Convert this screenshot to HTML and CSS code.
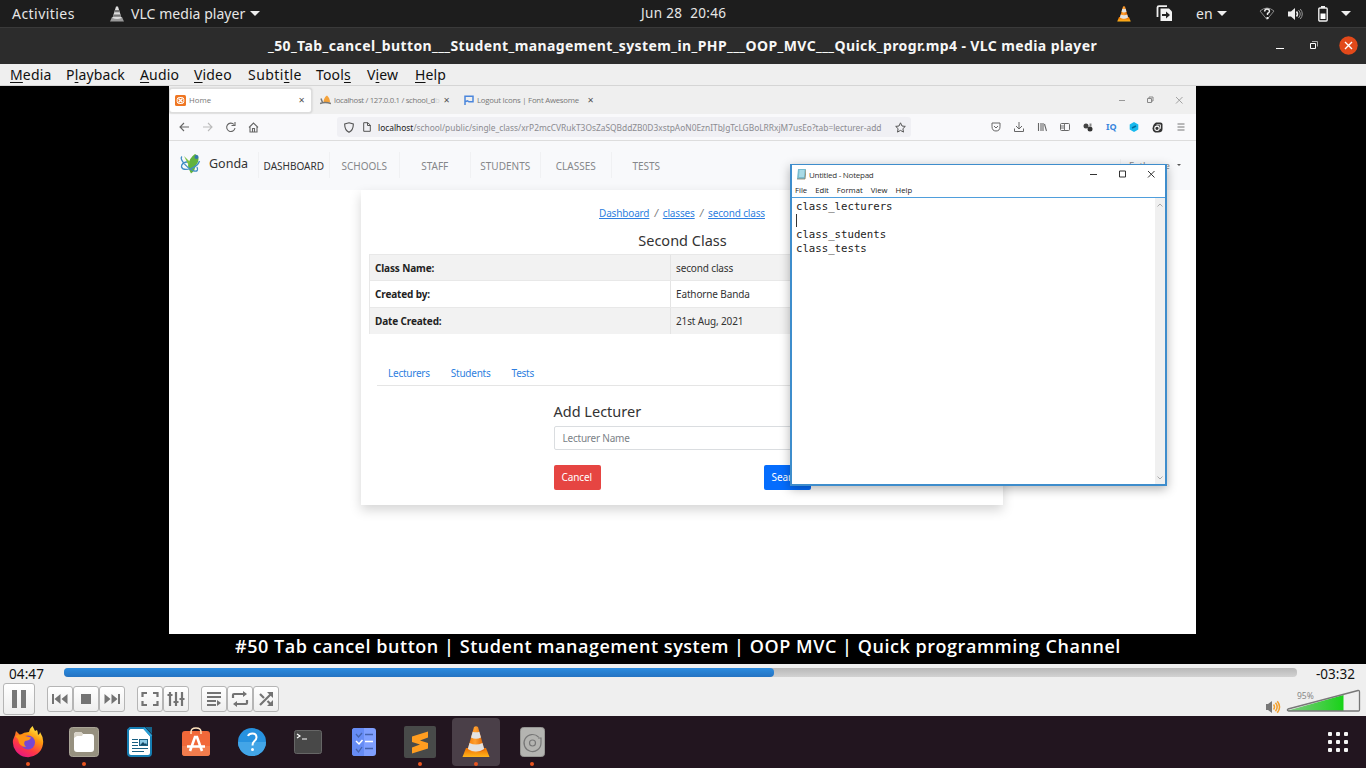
FILE: index.html
```html
<!DOCTYPE html>
<html lang="en">
<head>
<meta charset="utf-8">
<title>VLC media player</title>
<link rel="stylesheet" href="styles.css">
</head>
<body>
<svg class="defs" width="0" height="0">
  <defs>
    <linearGradient id="orange" x1="0" x2="1"><stop offset="0" stop-color="#f57900"/><stop offset=".45" stop-color="#ffa030"/><stop offset="1" stop-color="#d95d00"/></linearGradient>
    <linearGradient id="base" x1="0" y1="0" x2="0" y2="1"><stop offset="0" stop-color="#ef7000"/><stop offset="1" stop-color="#ffb51c"/></linearGradient>
    <linearGradient id="fire" x1=".8" y1="0" x2=".25" y2="1"><stop offset="0" stop-color="#fff44f"/><stop offset=".35" stop-color="#ff980e"/><stop offset=".7" stop-color="#ff3647"/><stop offset="1" stop-color="#e31587"/></linearGradient>
    <linearGradient id="volume" x1="0" x2="1"><stop offset="0" stop-color="#80c983"/><stop offset="1" stop-color="#18d318"/></linearGradient>
    <symbol id="cone" viewBox="0 0 28 32">
      <path d="M4 22H24L27.500 31H.5Z" fill="url(#base)"/>
      <path d="M12 1Q14-.3 16 1L22.500 24Q14 29 5.500 24Z" fill="url(#orange)"/>
      <path d="M10.700 5.700Q14 7 17.300 5.700L19 11.500Q14 14 9 11.500ZM7.500 17Q14 20 20.500 17L22.200 23Q14 28 5.800 23Z" fill="#e2e2e2"/>
    </symbol>
  </defs>
</svg>

<header class="panel">
  <span class="panel-activities">Activities</span>
  <svg class="panel-app-icon" width="14" height="16" viewBox="0 0 14 16"><path d="M2 11h10l2 4.500H0z" fill="#999"/><path d="M6 .5h2l3.500 11.500Q7 14 2.500 12z" fill="#ddd"/><path d="M5 4h4l.8 2.300H4.200zM3.600 8.500h6.800l.8 2.200H2.800z" fill="#777"/></svg>
  <span class="panel-app">VLC media player</span>
  <i class="caret"></i>
  <span class="panel-clock">Jun 28&nbsp; 20:46</span>
  <svg class="tray-cone" width="14" height="16"><use href="#cone"/></svg>
  <svg class="tray-share" width="17" height="17" viewBox="0 0 17 17"><path d="M1.500 12V2.500Q1.500 1.200 3 1.200H11" fill="none" stroke="#eee" stroke-width="1.800"/><path d="M4.500 3.500H13l3 3V16H4.500z" fill="#f2f2f2"/><path d="M6 10h5" stroke="#222" stroke-width="2"/><path d="M10 6.500l4 3.500-4 3.500z" fill="#222"/></svg>
  <span class="panel-lang">en</span><i class="caret"></i>
  <svg class="tray-wifi" width="16" height="14" viewBox="0 0 16 14"><path d="M1 4Q8-2 15 4L8 12.500Z" fill="none" stroke="#888"/><path d="M5.500 4.500Q6 2 8 2Q10.500 2 10.500 4.200Q10.500 5.500 8.500 6.500V8" fill="none" stroke="#eee" stroke-width="1.400"/><rect x="7.500" y="10" width="2" height="2" fill="#eee"/></svg>
  <svg class="tray-sound" width="16" height="14" viewBox="0 0 16 14"><path d="M1 4.500h3L8 1v12L4 9.500H1z" fill="#eee"/><path d="M9.500 4.500q2 2.500 0 5" fill="none" stroke="#eee" stroke-width="1.500"/><path d="M11.500 3q3.500 4 0 8M13.300 2q4 5 0 10" fill="none" stroke="#999"/></svg>
  <svg class="tray-battery" width="10" height="16" viewBox="0 0 10 16"><path d="M3 0h4v2H3z" fill="#eee"/><rect x=".8" y="2" width="8.400" height="13" rx="1" fill="none" stroke="#eee" stroke-width="1.400"/><path d="M2.500 7.500h5v5.500h-5z" fill="#fff"/></svg>
  <i class="caret caret-last"></i>
</header>

<div class="titlebar">
  <span class="titlebar-text">_50_Tab_cancel_button___Student_management_system_in_PHP___OOP_MVC___Quick_progr.mp4 - VLC media player</span>
  <div class="titlebar-buttons">
    <svg width="8" height="10"><path d="M0 8.500h8" stroke="#fff"/></svg>
    <svg width="8" height="8"><path d="M2 .5h5.500v5" fill="none" stroke="#aaa"/><path d="M.5 2.500h5v5h-5z" fill="none" stroke="#fff"/></svg>
    <svg width="19" height="19"><circle cx="9.500" cy="9.500" r="9.200" fill="#e2491a"/><path d="M6 6l7 7m0-7l-7 7" stroke="#fff" stroke-width="1.400"/></svg>
  </div>
</div>

<nav class="menubar">
  <span class="m1"><u>M</u>edia</span><span class="m2">P<u>l</u>ayback</span><span class="m3"><u>A</u>udio</span><span class="m4"><u>V</u>ideo</span><span class="m5">Subti<u>t</u>le</span><span class="m6">Tool<u>s</u></span><span class="m7">V<u>i</u>ew</span><span class="m8"><u>H</u>elp</span>
</nav>

<main class="video">
  <section class="browser">
    <div class="tabs">
      <div class="tab tab-active">
        <svg width="11" height="11"><rect width="11" height="11" rx="1.500" fill="#ef7622"/><path d="M3.500 3.500l4 4m0-4l-4 4" stroke="#fff" stroke-width="1.300"/><rect x="2.200" y="2.500" width="6.600" height="6" rx="2" fill="none" stroke="#fff"/></svg>
        <span class="tab-home">Home</span><b class="tab-close">✕</b>
      </div>
      <div class="tab tab-two">
        <svg width="11" height="10"><path d="M3.500 7Q4 2 7 0.500Q10 3 10 7.500z" fill="#f4a23a"/><path d="M1 3.500l1.500 4M0 8.500Q5 6.500 11 8.500" stroke="#777" stroke-width="1.500" fill="none"/></svg>
        <span class="tab-local">localhost / 127.0.0.1 / school_d<em>b</em></span><b class="tab-close">✕</b>
      </div>
      <div class="tab tab-three">
        <svg width="10" height="10"><path d="M1 10V1.200h8v5.600H5L3.500 5.800 1 6.800" fill="none" stroke="#4b86dc" stroke-width="1.500"/></svg>
        <span class="tab-fa">Logout Icons | Font Awesome</span><b class="tab-close">✕</b>
      </div>
      <svg class="win-controls" width="64" height="8" viewBox="0 0 64 8"><path d="M0 4.500h6" stroke="#999"/><path d="M28.500 2.500h4v4h-4zM30 2V1h4v4h-1" fill="none" stroke="#888"/><path d="M57 1l6.500 6.500m0-6.500L57 7.500" stroke="#999" stroke-width=".9"/></svg>
    </div>

    <div class="toolbar">
      <svg class="nav-buttons" width="80" height="12" viewBox="0 0 80 12" fill="none" stroke="#666" stroke-width="1.100"><path d="M10 6H1m4-4L1 6l4 4"/><path d="M24 6h9m-4-4l4 4-4 4" stroke="#bbb"/><path d="M55 3.500A4.200 4.200 0 1 0 56 7M56 1v3.500h-3.500"/><path d="M70 6.500L74.500 2l4.500 4.500M71 5.500V11h7V5.500M73.500 11V7.500h2V11"/></svg>
      <div class="address">
        <svg width="10" height="11" viewBox="0 0 10 11"><path d="M5 .7L9.300 2Q9.500 8 5 10.300Q.5 8 .7 2z" fill="none" stroke="#555" stroke-width="1.100"/></svg>
        <svg class="page-icon" width="8" height="10" viewBox="0 0 8 10"><path d="M.7.700h4L7.300 3v6.300H.7zM4.500.7v2.800h2.800" fill="none" stroke="#555"/></svg>
        <span class="url"><b>localhost</b>/school/public/single_class/xrP2mcCVRukT3OsZaSQBddZB0D3xstpAoN0EznITbJgTcLGBoLRRxjM7usEo?tab=lecturer-add</span>
        <svg class="star" width="11" height="11" viewBox="0 0 11 11"><path d="M5.500.8L7 4l3.300.4-2.400 2.300.6 3.400-3-1.700-3 1.700.6-3.400L.7 4.400 4 4z" fill="none" stroke="#555"/></svg>
      </div>
      <div class="extensions">
        <svg width="10" height="10" viewBox="0 0 10 10"><path d="M1 1h8v3.500Q9 9 5 9T1 4.500zM3 4l2 2 2-2" fill="none" stroke="#666"/></svg>
        <svg width="10" height="10" viewBox="0 0 10 10"><path d="M5 0v6.500M2 4l3 3 3-3M.5 6.500v3h9v-3" fill="none" stroke="#666"/></svg>
        <svg width="10" height="10" viewBox="0 0 10 10"><path d="M1.500 1v8M4 1v8M6 1v8M7.500 2l2 7" fill="none" stroke="#666" stroke-width="1.100"/></svg>
        <svg width="10" height="10" viewBox="0 0 10 10"><rect x=".5" y="1.500" width="9" height="7" rx="1" fill="none" stroke="#666"/><path d="M4.500 1.500v7M1 4h3M1 6h3" stroke="#777"/></svg>
        <svg width="10" height="10" viewBox="0 0 10 10"><circle cx="3" cy="4" r="2.500" fill="#444"/><circle cx="7" cy="7" r="2.500" fill="#333"/><path d="M6.500 1.500h2v3h-2z" fill="#888"/></svg>
        <span class="iq">IQ</span>
        <svg width="10" height="10" viewBox="0 0 10 10"><path d="M5 0l4.300 2.500v5L5 10 .7 7.500v-5z" fill="#17b9ee"/><path d="M3 6l4-2" stroke="#056a9a" stroke-width="1.500"/></svg>
        <svg width="11" height="11" viewBox="0 0 11 11"><path d="M4 .5h4.500q2 0 2 2V7q0 3.500-4.500 3.500H3Q.5 9.500.5 6.500 1 2 4 .5z" fill="#333"/><circle cx="5" cy="6.300" r="2.200" fill="none" stroke="#fff" stroke-width="1.100"/><path d="M4.500 2.800h4v4" stroke="#fff" fill="none" stroke-width=".8"/></svg>
        <svg width="10" height="10" viewBox="0 0 10 10"><path d="M1.500 2h7m-7 3h7m-7 3h7" stroke="#777"/></svg>
      </div>
    </div>

    <nav class="site-nav">
      <svg class="logo" width="21" height="22" viewBox="0 0 21 22"><path d="M8 13Q9 5 15 1Q20 3 18 9Q15 13 14 18L11 20.500Q9 17 8 13" fill="#62b33e"/><path d="M2 3.500Q0 5 3 9Q7 15 14 18Q19 19 17 14M9 8.500Q1 9.500 1.500 14Q3 18 11 15.500Q18 13 19.500 8" fill="none" stroke="#3f8dc4" stroke-width="1.300"/><path d="M4 3l6 6-1 4z" fill="#7cc142"/><circle cx="16.500" cy="4" r="2" fill="#3476ae"/></svg>
      <span class="brand">Gonda</span>
      <a class="on">DASHBOARD</a><a>SCHOOLS</a><a>STAFF</a><a>STUDENTS</a><a>CLASSES</a><a>TESTS</a>
      <span class="account">Eathorne<i></i></span>
    </nav>

    <div class="card">
      <div class="crumbs"><u>Dashboard</u><i>/</i><u>classes</u><i>/</i><u>second class</u></div>
      <h1>Second Class</h1>
      <div class="table">
        <div class="row shade"><b>Class Name:</b><span>second class</span></div>
        <div class="row"><b>Created by:</b><span>Eathorne Banda</span></div>
        <div class="row shade"><b>Date Created:</b><span>21st Aug, 2021</span></div>
      </div>
      <div class="pills"><a>Lecturers</a><a>Students</a><a>Tests</a></div>
      <div class="form">
        <h2>Add Lecturer</h2>
        <div class="field">Lecturer Name</div>
        <div class="actions"><span class="btn red">Cancel</span><span class="btn blue">Search</span></div>
      </div>
    </div>

    <aside class="notepad">
      <div class="np-title">
        <svg width="10" height="12" viewBox="0 0 10 12"><path d="M2 1h8L9 11H1z" fill="#79bccf"/><path d="M3.500 2h5L8 9H3z" fill="#a9dbe6"/><path d="M1 11h8l1-9" stroke="#8b8264" fill="none" stroke-width=".8"/></svg>
        <span>Untitled - Notepad</span>
        <svg class="np-controls" width="66" height="8" viewBox="0 0 66 8"><path d="M0 4.500h7" stroke="#333"/><path d="M29.500 1h6v6h-6z" fill="none" stroke="#333"/><path d="M58 1l6.500 6.500m0-6.500L58 7.500" stroke="#333"/></svg>
      </div>
      <div class="np-menu"><span>File</span><span>Edit</span><span>Format</span><span>View</span><span>Help</span></div>
      <div class="np-body">
        <div class="np-text"><p>class_lecturers</p><p><i></i></p><p>class_students</p><p>class_tests</p></div>
        <div class="np-scroll"><svg width="6" height="4"><path d="M.5 3.500L3 1l2.500 2.500" fill="none" stroke="#aaa"/></svg><svg width="6" height="4"><path d="M.5.500L3 3 5.500.5" fill="none" stroke="#aaa"/></svg></div>
      </div>
    </aside>
  </section>
  <p class="caption">#50 Tab cancel button | Student management system | OOP MVC | Quick programming Channel</p>
</main>

<section class="controls">
  <div class="seek"><span class="t-now">04:47</span><div class="track"><div class="fill" style="width:57.6%"></div></div><span class="t-left">-03:32</span></div>
  <div class="buttons">
    <span class="cbtn big"><svg width="18" height="20"><path d="M2 1h5v18H2zM11 1h5v18h-5z" fill="#777"/></svg></span>
    <div class="group">
      <span class="cbtn"><svg width="18" height="16" fill="#737373"><path d="M1 3h2v10H1zM9.500 3v10L3.500 8zM16.500 3v10l-6-5z"/></svg></span>
      <span class="cbtn"><svg width="18" height="16"><path d="M4 3h10v10H4z" fill="#737373"/></svg></span>
      <span class="cbtn"><svg width="18" height="16" fill="#737373"><path d="M1.500 3v10l6-5zM8.500 3v10l6-5zM15 3h2v10h-2z"/></svg></span>
    </div>
    <div class="group">
      <span class="cbtn"><svg width="18" height="16"><path d="M1.500 6V2H6M12 2h4.500v4M16.500 10v4H12M6 14H1.500v-4" fill="none" stroke="#737373" stroke-width="2.200"/></svg></span>
      <span class="cbtn"><svg width="18" height="16"><path d="M3 1v14M9 1v14M15 1v14M0.500 4h5M6.500 11h5M12.500 8h5" stroke="#737373" stroke-width="2.200"/></svg></span>
    </div>
    <div class="group">
      <span class="cbtn"><svg width="18" height="16"><path d="M2 2h14M2 6h14M2 10h9M2 14h9" stroke="#737373" stroke-width="2"/><path d="M12 9l4 3-4 3z" fill="#737373"/></svg></span>
      <span class="cbtn"><svg width="18" height="16"><path d="M2 7V4q0-1 1-1h10M16 9v3q0 1-1 1H5" fill="none" stroke="#737373" stroke-width="2.200"/><path d="M12 0l4 3-4 3zM6 10l-4 3 4 3z" fill="#737373"/></svg></span>
      <span class="cbtn"><svg width="18" height="16"><path d="M3 14L14 3M3 3l4 4M10.500 10l4 4" fill="none" stroke="#737373" stroke-width="2.200"/><path d="M10 1h6v6zM16 9v6h-6z" fill="#737373"/></svg></span>
    </div>
    <svg class="speaker" width="16" height="14" viewBox="0 0 16 14"><path d="M1 4h2l4-3v12l-4-3H1z" fill="#777"/><path d="M8.500 4.500q2 2.500 0 5M10.500 2.800q3.300 4.200 0 8.400M12.300 1.300q4.500 5.700 0 11.400" fill="none" stroke="#f3a02c" stroke-width="1.500"/></svg>
    <div class="volume"><span>95%</span><svg width="75" height="24" viewBox="0 0 75 24"><path d="M2 21.500L57.500 6v16H2z" fill="url(#volume)"/><path d="M2 20L72 1.500Q73.500 1.200 73.500 3v18q0 1-1 1H2.500q-2-1-.5-2z" fill="none" stroke="#777" stroke-width="1.300"/></svg></div>
  </div>
</section>

<footer class="dock">
  <div class="app run"><svg width="32" height="32" viewBox="0 0 32 32"><path d="M3 9l1-4 4 4q4-3 9-3Q18 2 20.500 0L23 5l2-1q1 2 1 5 2-1 2-3 4 6 3 12A15 15 0 1 1 1 14z" fill="url(#fire)"/><circle cx="16" cy="16.500" r="7" fill="#7747d4"/><path d="M3 10q6-3 10 0l6 1.500q-1 3-6 3.500-2 3 1 6-7 0-8-8z" fill="#ff9316"/></svg></div>
  <div class="app run"><svg width="30" height="30" viewBox="0 0 30 30"><rect x=".5" y=".5" width="29" height="29" rx="3" fill="#96907f" stroke="#aaa597"/><path d="M5 8q0-3 3-3h4l2 2h8q3 0 3 3v12q0 3-3 3H8q-3 0-3-3z" fill="#fff"/><path d="M5 11V8q0-3 3-3h4l2 2-1 2H8z" fill="#d9d4c8"/></svg></div>
  <div class="app"><svg width="26" height="30" viewBox="0 0 26 30"><path d="M3 1h14l7 8v17q0 3-3 3H4q-3 0-3-3V3z" fill="#fff" stroke="#167eb3" stroke-width="2"/><path d="M18 0h7v7z" fill="#15638a"/><path d="M17 1l7.500 8" stroke="#28a1d9" stroke-width="2"/><path d="M5 12.500h6M5 15.500h6M5 18.500h6M5 21.500h16M5 24.500h12" stroke="#195f82"/><rect x="12.500" y="12.500" width="8" height="6" fill="#8cc9e5" stroke="#195f82"/><path d="M13 18l3-3 2 2 1-1 1 2z" fill="#174b66"/></svg></div>
  <div class="app"><svg width="30" height="30" viewBox="0 0 30 30"><rect x="1" y="4" width="28" height="25" rx="3" fill="#f16839"/><path d="M1 19h28v7q0 3-3 3H4q-3 0-3-3z" fill="#f27c4d"/><path d="M10 7V5q0-4 5-4t5 4v2" stroke="#ffe3bd" stroke-width="1.500" fill="none"/><path d="M9 24L14 10h2l5 14M6 19.500h18" stroke="#fff" stroke-width="2.600" fill="none"/></svg></div>
  <div class="app"><svg width="28" height="28" viewBox="0 0 28 28"><circle cx="14" cy="14" r="14" fill="#2792df"/><path d="M0 14h28a14 14 0 0 1-28 0" fill="#43a5e7"/><path d="M10 8q1-2.500 4.500-2.500 4 0 4 4 0 2-2.500 4-1.500 1.300-1.500 4" stroke="#fff" stroke-width="2" fill="none"/><circle cx="14.500" cy="21.500" r="1.500" fill="#fff"/></svg></div>
  <div class="app"><svg width="28" height="24" viewBox="0 0 28 24"><rect x=".5" y=".5" width="27" height="23" rx="2" fill="#484848" stroke="#666"/><path d="M3 4l3 2-3 2M8 9h5" stroke="#fff" fill="none" stroke-width="1.200"/></svg></div>
  <div class="app"><svg width="24" height="28" viewBox="0 0 24 28"><rect width="24" height="28" rx="3" fill="#7f9fff"/><path d="M3 0h9v28H3q-3 0-3-3V3q0-3 3-3z" fill="#668cf5"/><path d="M4 6l2.500 3L10 5M4 21l2.500 3L10 19M13 6.500h8M13 20.500h8" stroke="#4563ae" fill="none" stroke-width="1.300"/><path d="M4 13l3 3 3.500-4M13 13.500h8" stroke="#fff" fill="none" stroke-width="1.500"/></svg></div>
  <div class="app run"><svg width="32" height="32" viewBox="0 0 32 32"><rect width="32" height="32" rx="2" fill="#484a49"/><path d="M8 10.500l16-5v6l-8 3 8 2.500v5.500l-16 5v-6l8-3-8-2.500z" fill="#ff9d20"/></svg></div>
  <div class="app run active"><svg width="28" height="32"><use href="#cone"/></svg></div>
  <div class="app run"><svg width="25" height="30" viewBox="0 0 25 30"><rect x=".5" y=".5" width="24" height="29" rx="3" fill="#b4b4b1" stroke="#969693"/><path d="M18.500 10A8.500 8.500 0 1 0 21 16V11h-3" fill="none" stroke="#777" stroke-width="1.200"/><circle cx="12.500" cy="16" r="3" fill="none" stroke="#777" stroke-width="1.200"/></svg></div>
  <svg class="grid" width="20" height="20" fill="#f5f5f5"><rect width="4" height="4" rx="1"/><rect x="8" width="4" height="4" rx="1"/><rect x="16" width="4" height="4" rx="1"/><rect y="8" width="4" height="4" rx="1"/><rect x="8" y="8" width="4" height="4" rx="1"/><rect x="16" y="8" width="4" height="4" rx="1"/><rect y="16" width="4" height="4" rx="1"/><rect x="8" y="16" width="4" height="4" rx="1"/><rect x="16" y="16" width="4" height="4" rx="1"/></svg>
</footer>
</body>
</html>
```
FILE: styles.css
```css
* { box-sizing: border-box; }
body { margin: 0; width: 1366px; height: 768px; overflow: hidden; background: #000; font-family: "Noto Sans", sans-serif; display: flex; flex-direction: column; }
svg { display: block; flex: none; }
.defs { position: absolute; }
p, h1, h2 { margin: 0; font-weight: 400; }

.panel { height: 27px; background: #1d1d1d; color: #e6e6e6; display: flex; align-items: center; font-size: 14px; white-space: nowrap; flex: none; }
.panel span { padding-bottom: 1px; }
.panel-activities { margin-left: 12px; width: 98px; letter-spacing: .45px; }
.panel-app { margin-left: 7px; width: 114px; letter-spacing: .05px; }
.caret { width: 0; height: 0; border: 5px solid transparent; border-top-color: #eee; border-bottom: 0; margin-left: 5px; flex: none; }
.panel-clock { margin-left: 381px; width: 86px; font-size: 13.500px; letter-spacing: .35px; }
.tray-cone { margin-left: 390px; }
.tray-share { margin-left: 25px; }
.panel-lang { margin-left: 23px; width: 16px; }
.tray-wifi { margin-left: 32px; }
.tray-sound { margin-left: 12px; }
.tray-battery { margin-left: 15px; }
.caret-last { margin-left: 13px; }

.titlebar { height: 37px; background: #2c2c2c; border-top: 1px solid #3a3a3a; color: #f7f7f7; display: flex; align-items: center; flex: none; }
.titlebar-text { margin-left: 268px; width: 829px; white-space: nowrap; font-weight: 700; font-size: 14px; letter-spacing: .4px; padding-bottom: 2px; }
.titlebar-buttons { margin-left: 179px; display: flex; align-items: center; gap: 26px; padding-bottom: 2px; }
.titlebar-buttons svg:last-child { margin-left: -5px; }

.menubar { height: 22px; background: #efefef; border-bottom: 1px solid #d5d5d5; display: flex; align-items: center; padding-left: 10px; font-size: 14px; color: #111; flex: none; white-space: nowrap; letter-spacing: .15px; }
.menubar u { text-underline-offset: 2px; text-decoration-skip-ink: none; }
.m1 { width: 56px; } .m2 { width: 74px; } .m3 { width: 54px; } .m4 { width: 54px; }
.m5 { width: 68px; } .m6 { width: 51px; } .m7 { width: 48px; }
.m5 { letter-spacing: .45px; }

.video { height: 578px; background: #000; display: flex; flex-direction: column; align-items: center; flex: none; }
.browser { position: relative; width: 1027px; height: 548px; margin-right: 1px; background: #fff; flex: none; color: #333; font-family: "Noto Sans", sans-serif; overflow: hidden; }
.tabs { height: 28px; background: #efefef; display: flex; align-items: center; font-family: "Open Sans", sans-serif; font-size: 7.800px; color: #777; white-space: nowrap; }
.tab { display: flex; align-items: center; height: 25px; }
.tab-active { background: #fff; width: 143px; border: 1px solid #ddd; border-radius: 3px; padding-left: 5px; box-shadow: 0 0 2px #bbb; }
.tab-two { margin-left: 8px; width: 144px; }
.tab-three { width: 130px; }
.tab span { margin-left: 3px; }
.tab em { color: #d5d5d5; font-style: normal; }
.tab-close { margin-left: auto; font: 8px "DejaVu Sans", sans-serif; letter-spacing: 0; color: #555; margin-right: 6px; }
.tab-two .tab-close { margin-right: 14px; }
.tab-three .tab-close { margin-right: 0; }
.tab-local { letter-spacing: -.32px; }
.tab-fa { letter-spacing: -.24px; }
.win-controls { margin-left: 525px; }
.toolbar { height: 27px; border-bottom: 1px solid #ddd; background: #f9f9fb; display: flex; align-items: center; }
.nav-buttons { margin-left: 10px; }
.address { margin-left: 78px; width: 574px; height: 20px; background: #f0f0f4; border-radius: 3px; display: flex; align-items: center; padding-left: 7px; font-size: 8.400px; color: #8b8b90; white-space: nowrap; }
.page-icon { margin-left: 9px; }
.url { margin-left: 7px; width: 505px; }
.url b { font-weight: 400; color: #222; }
.star { margin-left: 12px; }
.extensions { margin-left: 80px; display: flex; align-items: center; gap: 13px; }
.iq { color: #3a86dd; font-size: 9px; font-weight: 700; width: 10px; line-height: 10px; }
.site-nav { height: 49px; background: #f8f9fb; display: flex; align-items: center; padding-bottom: 1px; font-size: 10px; color: #85878a; }
.logo { margin-left: 11px; margin-bottom: 2px; }
.brand { margin-left: 8px; width: 49px; font-size: 12.500px; color: #333; padding-bottom: 3px; }
.site-nav a { width: 70.500px; height: 26px; line-height: 28px; text-align: center; border-left: 1px solid #f0f1f3; }
.site-nav .on { color: #333; }
.account { border-left: 1px solid #f0f1f3; margin-left: 439px; width: 62px; padding-left: 8px; display: flex; align-items: center; color: #888; font-size: 9.500px; }
.account i { border: 2.500px solid transparent; border-top-color: #555; border-bottom: 0; margin-left: 7px; }

.card { margin-left: 192px; width: 642px; height: 315px; padding: 16px 8px 0; box-shadow: 0 5px 11px rgba(0,0,0,.17); font-size: 10px; }
.crumbs { display: flex; justify-content: center; gap: 5px; height: 14px; line-height: 14px; letter-spacing: -.16px; }
.crumbs u { color: #2f7fe0; }
.crumbs i { color: #777; }
h1 { font-size: 14.500px; line-height: 20px; height: 34px; padding: 10px 0 0 1px; text-align: center; color: #333; }
.table { border: 1px solid #e8e8e8; height: 80px; letter-spacing: -.14px; }
.row { display: flex; height: 26.300px; line-height: 26px; border-bottom: 1px solid #e8e8e8; }
.row:last-child { border: 0; }
.row b { width: 301px; padding-left: 5px; border-right: 1px solid #e4e4e4; color: #222; }
.row span { padding-left: 5px; }
.shade { background: #f2f2f2; }
.pills { margin: 26px 8px 0; height: 26px; line-height: 27px; display: flex; padding-left: 11px; gap: 21px; border-bottom: 1px solid #e5e5e5; color: #2f7fe0; letter-spacing: -.24px; }
.form { width: 257px; margin: 16px auto 0; }
h2 { font-size: 14.500px; line-height: 18px; color: #333; height: 24px; }
.field { height: 24px; line-height: 22px; border: 1px solid #dadde0; border-radius: 2px; padding-left: 8px; color: #7b8187; letter-spacing: -.22px; }
.actions { display: flex; justify-content: space-between; margin-top: 15px; }
.btn { width: 47px; height: 25px; line-height: 25px; border-radius: 2px; color: #fff; padding-left: 8px; letter-spacing: -.1px; }
.red { background: #e64542; } .blue { background: #056dfd; }

.notepad { position: absolute; left: 621px; top: 78px; width: 377px; height: 322px; border: 2px solid #3e8dcc; border-top-width: 1px; background: #fff; box-shadow: 0 3px 10px rgba(0,0,0,.3); display: flex; flex-direction: column; font-family: "Open Sans", sans-serif; font-size: 8px; }
.np-title { height: 19px; display: flex; align-items: center; padding: 0 0 1px 4px; }
.np-title span { margin-left: 3px; width: 68px; white-space: nowrap; letter-spacing: -.25px; }
.np-controls { margin-left: 213px; }
.np-menu { height: 13px; display: flex; align-items: center; gap: 8px; padding-left: 3px; line-height: 13px; color: #222; font-size: 7.700px; }
.np-body { flex: 1; border-top: 1px solid #4f9edc; display: flex; justify-content: space-between; }
.np-text { padding: 2px 0 0 4px; font: 10.700px "DejaVu Sans Mono", monospace; color: #222; }
.np-text p { height: 14.100px; line-height: 14px; }
.np-text i { display: block; width: 1px; height: 13px; background: #333; }
.np-scroll { width: 10px; background: #f0f0f0; display: flex; flex-direction: column; justify-content: space-between; align-items: center; padding: 5px 0 4px; }
.caption { width: 886px; margin-right: 10px; color: #fff; font: 600 18px/25px "Open Sans", sans-serif; letter-spacing: .54px; white-space: nowrap; }

.controls { height: 52px; background: #efefef; flex: none; color: #111; }
.seek { height: 18px; display: flex; align-items: center; font-size: 13.500px; padding-top: 1px; }
.t-now { margin-left: 9px; width: 55px; letter-spacing: .1px; }
.track { width: 1233px; height: 9px; border-radius: 4px; background: linear-gradient(#b8b8b8, #d2d2d2); margin-top: -2px; }
.fill { height: 9px; border-radius: 4px; background: linear-gradient(#2b8ce0, #2473c2); }
.t-left { margin-left: 19px; }
.buttons { display: flex; align-items: center; height: 34px; padding-left: 3px; }
.cbtn { width: 26px; height: 26px; border: 1px solid #b5b5b5; border-radius: 3px; background: linear-gradient(#fff, #eee); display: flex; align-items: center; justify-content: center; }
.big { width: 32px; height: 32px; }
.group { display: flex; margin-left: 12px; }
.speaker { margin: 15px 5px 0 986px; }
.volume { position: relative; margin-top: 4px; }
.volume span { position: absolute; left: 11px; top: 1px; font-size: 8.500px; line-height: 11px; color: #888; }

.dock { height: 52px; background: #22151f; display: flex; align-items: center; flex: none; padding-left: 4px; }
.app { position: relative; width: 48px; height: 48px; margin-right: 8px; border-radius: 4px; display: flex; align-items: center; justify-content: center; }
.active { background: #4a3f48; }
.run::after { content: ""; position: absolute; left: 22px; bottom: 0; width: 4px; height: 4px; border-radius: 2px; background: #e95420; }
.grid { margin-left: 764px; }
```
